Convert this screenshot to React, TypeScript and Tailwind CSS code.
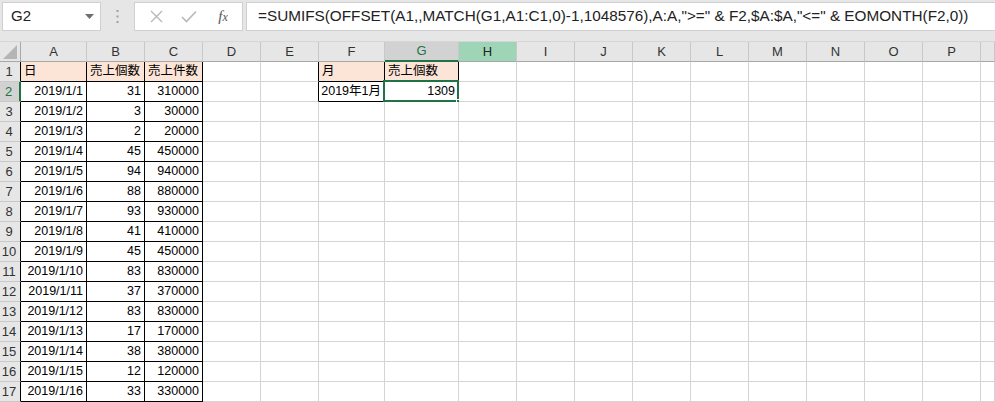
import React from "react";

const FONT = '"Liberation Sans", "Noto Sans CJK JP", sans-serif';

const colLetters = ["A", "B", "C", "D", "E", "F", "G", "H", "I", "J", "K", "L", "M", "N", "O", "P", ""];

const data: [string, number, number][] = [
  ["2019/1/1", 31, 310000],
  ["2019/1/2", 3, 30000],
  ["2019/1/3", 2, 20000],
  ["2019/1/4", 45, 450000],
  ["2019/1/5", 94, 940000],
  ["2019/1/6", 88, 880000],
  ["2019/1/7", 93, 930000],
  ["2019/1/8", 41, 410000],
  ["2019/1/9", 45, 450000],
  ["2019/1/10", 83, 830000],
  ["2019/1/11", 37, 370000],
  ["2019/1/12", 83, 830000],
  ["2019/1/13", 17, 170000],
  ["2019/1/14", 38, 380000],
  ["2019/1/15", 12, 120000],
  ["2019/1/16", 33, 330000],
];

type Cell = { text?: string; right?: boolean; peach?: boolean; boxed?: boolean };

function cellAt(row: number, col: number): Cell {
  // col 0 = A
  if (row === 1) {
    if (col === 0) return { text: "日", peach: true, boxed: true };
    if (col === 1) return { text: "売上個数", peach: true, boxed: true };
    if (col === 2) return { text: "売上件数", peach: true, boxed: true };
    if (col === 5) return { text: "月", peach: true, boxed: true };
    if (col === 6) return { text: "売上個数", peach: true, boxed: true };
    return {};
  }
  if (row === 2) {
    if (col === 5) return { text: "2019年1月", right: true, boxed: true };
    if (col === 6) return { text: "1309", right: true, boxed: true };
  }
  const d = data[row - 2];
  if (d && col <= 2) return { text: String(d[col]), right: true, boxed: true };
  return {};
}

function FormulaBar() {
  return (
    <div className="flex h-[42px] items-start gap-0 border-b border-[#d6d6d6] bg-[#e6e6e6] pt-[2px]">
      <div className="ml-[2px] flex h-[29px] w-[99px] items-center justify-between border border-[#d0d0d0] bg-white pl-[8px] pr-[6px]">
        <span className="text-[15px] text-[#222]">G2</span>
        <svg width="9" height="5" viewBox="0 0 9 5">
          <polygon points="0,0 9,0 4.5,5" fill="#6f6f6f" />
        </svg>
      </div>
      <div className="flex h-[29px] w-[33px] items-center justify-center">
        <svg width="3" height="13" viewBox="0 0 3 13">
          <rect x="0.5" y="0" width="2" height="2" fill="#a0a0a0" />
          <rect x="0.5" y="5.5" width="2" height="2" fill="#a0a0a0" />
          <rect x="0.5" y="11" width="2" height="2" fill="#a0a0a0" />
        </svg>
      </div>
      <div className="flex h-[29px] w-[109px] items-center border border-[#d0d0d0] bg-white">
        <div className="flex w-[38px] justify-center pl-[4px]">
          <svg width="13" height="13" viewBox="0 0 13 13">
            <path d="M1 1 L12 12 M12 1 L1 12" stroke="#b8b8b8" strokeWidth="1.4" />
          </svg>
        </div>
        <div className="flex w-[32px] justify-center">
          <svg width="16" height="13" viewBox="0 0 16 13">
            <path d="M1 7 L5.5 11.5 L15 1.5" stroke="#b8b8b8" strokeWidth="1.6" fill="none" />
          </svg>
        </div>
        <div className="flex w-[36px] justify-center">
          <span className="text-[15px] italic text-[#555]" style={{ fontFamily: '"Liberation Serif", serif' }}>
            f<span className="text-[12px]">x</span>
          </span>
        </div>
      </div>
      <div className="ml-[3px] flex h-[29px] flex-1 items-center border border-r-0 border-[#d0d0d0] bg-white pl-[11px]">
        <span className="whitespace-nowrap text-[15.3px] text-[#222]">
          =SUMIFS(OFFSET(A1,,MATCH(G1,A1:C1,0)-1,1048576),A:A,"&gt;=" &amp; F2,$A:$A,"&lt;=" &amp; EOMONTH(F2,0))
        </span>
      </div>
    </div>
  );
}

function Sheet() {
  const rows = Array.from({ length: 17 }, (_, i) => i + 1);
  return (
    <div
      className="grid text-[12.5px] text-black"
      style={{
        gridTemplateColumns: "21px 66px 58px 58px 58px 58px 66px 74px 58px 58px 58px 58px 58px 58px 58px 58px 58px 1fr",
        gridAutoRows: "20px",
      }}
    >
      {/* header row */}
      <div className="relative border-b border-r border-[#a8a8a8] bg-[#e6e6e6]">
        <svg className="absolute bottom-[2px] right-[3px]" width="14" height="14" viewBox="0 0 14 14">
          <polygon points="14,0 14,14 0,14" fill="#b5b5b5" />
        </svg>
      </div>
      {colLetters.map((l, i) => {
        const isG = l === "G";
        const isH = l === "H";
        return (
          <div
            key={i}
            className={
              "flex items-center justify-center border-r text-[13px] " +
              (isG
                ? "border-b-2 border-r-[#c8c8c8] border-b-[#217346] bg-[#d2d2d2] text-[#217346]"
                : isH
                  ? "border-b border-r-[#c8c8c8] border-b-[#a8a8a8] bg-[#9fd5b7] text-[#222]"
                  : "border-b border-r-[#c8c8c8] border-b-[#a8a8a8] bg-[#e6e6e6] text-[#333]")
            }
          >
            {l}
          </div>
        );
      })}

      {rows.map((r) => (
        <React.Fragment key={r}>
          <div
            className={
              "flex items-center justify-center pr-[2px] text-[13px] border-b border-b-[#c8c8c8] " +
              (r === 2
                ? "border-r-2 border-r-[#217346] bg-[#d2d2d2] text-[#217346]"
                : "border-r border-r-black bg-[#e6e6e6] text-[#333]")
            }
          >
            {r}
          </div>
          {colLetters.map((_, c) => {
            const cell = cellAt(r, c);
            const rightBlack = cell.boxed || (c === 4 && r <= 2);
            const bottomBlack = cell.boxed;
            const isSel = r === 2 && c === 6;
            return (
              <div
                key={c}
                className={
                  "relative flex items-center overflow-visible whitespace-nowrap px-[3px] border-r border-b " +
                  (rightBlack ? "border-r-black " : "border-r-[#d4d4d4] ") +
                  (bottomBlack ? "border-b-black " : "border-b-[#d4d4d4] ") +
                  (cell.peach ? "bg-[#fce4d6] " : "bg-white ") +
                  (cell.right ? "justify-end" : "justify-start")
                }
              >
                {cell.text}
                {isSel && (
                  <>
                    <div className="pointer-events-none absolute -bottom-[1px] -left-[2px] -right-[1px] -top-[2px] border-2 border-[#217346]" />
                    <div className="absolute -bottom-[4px] -right-[4px] h-[6px] w-[6px] border border-white bg-[#217346]" />
                  </>
                )}
              </div>
            );
          })}
        </React.Fragment>
      ))}
    </div>
  );
}

export default function App() {
  return (
    <div className="h-[402px] w-[995px] overflow-hidden bg-white" style={{ fontFamily: FONT }}>
      <FormulaBar />
      <Sheet />
    </div>
  );
}
